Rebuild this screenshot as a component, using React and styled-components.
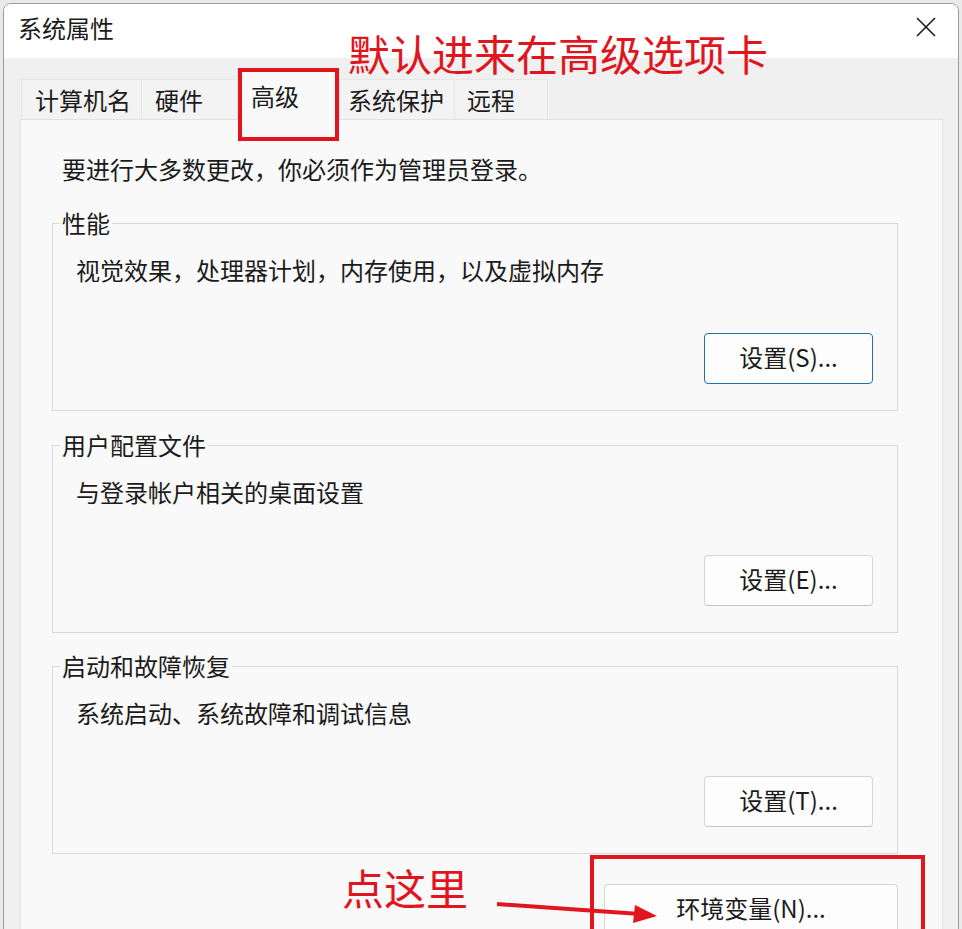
import React from 'react'
import styled, { createGlobalStyle } from 'styled-components'

const RED = '#e1151d'

const GlobalStyle = createGlobalStyle`
  html, body {
    margin: 0;
    padding: 0;
  }
  body {
    background: #e9e9e9;
    font-family: "Noto Sans CJK SC", "Noto Sans", sans-serif;
    color: #1b1b1b;
    overflow: hidden;
  }
`

const Page = styled.div`
  position: relative;
  width: 962px;
  height: 929px;
  box-sizing: border-box;
  padding: 3px 0 0 3px;
  overflow: hidden;
`

const Window = styled.div`
  width: 956px;
  height: 1000px;
  box-sizing: border-box;
  border: 1px solid #9c9c9c;
  border-radius: 8px 8px 0 0;
  background: #f0f0f0;
  overflow: hidden;
`

const TitleBar = styled.div`
  height: 54px;
  background: #ffffff;
  display: flex;
  align-items: center;
  justify-content: space-between;
  padding-left: 14px;
`

const Title = styled.div`
  font-size: 24px;
  line-height: 32px;
  margin-bottom: 6px;
`

const CloseButton = styled.div`
  width: 20px;
  height: 20px;
  margin: 0 22px 8px 0;
  display: flex;
  align-items: center;
  justify-content: center;
`

const Body = styled.div`
  padding: 10px 15px 0 16px;
`

const TabStrip = styled.div`
  display: flex;
  align-items: flex-end;
  height: 51px;
  padding-left: 2px;
`

const Tab = styled.div`
  position: relative;
  box-sizing: border-box;
  width: ${p => p.$w}px;
  height: ${p => (p.$active ? 52 : 40)}px;
  margin-left: -1px;
  margin-bottom: ${p => (p.$active ? -1 : 0)}px;
  padding: ${p => (p.$active ? 8 : 1)}px 0 0 ${p => p.$pad}px;
  font-size: 24px;
  line-height: 38px;
  white-space: nowrap;
  background: ${p => (p.$active ? '#f9f9f9' : '#f3f3f3')};
  border: 1px solid ${p => (p.$active ? '#e0e0e0' : '#e6e6e6')};
  border-bottom: none;
  z-index: ${p => (p.$active ? 1 : 0)};
`

const Panel = styled.div`
  height: 900px;
  box-sizing: border-box;
  background: #f9f9f9;
  border: 1px solid #e2e2e2;
  padding: 33px 44px 0 31px;
`

const Intro = styled.div`
  margin-left: 10px;
  font-size: 24px;
  line-height: 32px;
`

const Group = styled.fieldset`
  margin: ${p => p.$top}px 0 0 0;
  padding: 16px 24px 26px 7px;
  min-width: 0;
  border: 1px solid #dadada;
`

const GroupLabel = styled.legend`
  padding: 0 2px;
  font-size: 24px;
  line-height: 30px;
`

const Desc = styled.div`
  margin-left: 16px;
  font-size: 24px;
  line-height: 32px;
`

const ButtonRow = styled.div`
  display: flex;
  justify-content: flex-end;
  margin-top: ${p => p.$top}px;
`

const Button = styled.div`
  box-sizing: border-box;
  width: ${p => p.$w}px;
  height: 51px;
  display: flex;
  align-items: center;
  justify-content: center;
  background: #fdfdfd;
  border: 1px solid ${p => (p.$focus ? '#2170a6' : '#d6d6d6')};
  border-bottom-color: ${p => (p.$focus ? '#2170a6' : '#c4c4c4')};
  border-radius: 4px;
  font-size: 24px;
  line-height: 32px;
  padding-bottom: 3px;
`

const Note = styled.div`
  position: absolute;
  z-index: 2;
  left: ${p => p.$x}px;
  top: ${p => p.$y}px;
  color: ${RED};
  font-size: 42px;
  line-height: 42px;
  white-space: nowrap;
`

const Mark = styled.div`
  position: absolute;
  z-index: 2;
  left: ${p => p.$x}px;
  top: ${p => p.$y}px;
  width: ${p => p.$w}px;
  height: ${p => p.$h}px;
  box-sizing: border-box;
  border: 4px solid ${RED};
`

const Arrow = styled.svg`
  position: absolute;
  z-index: 2;
  left: 490px;
  top: 890px;
`

const tabs = [
  { label: '计算机名', w: 121, pad: 13 },
  { label: '硬件', w: 97, pad: 13 },
  { label: '高级', w: 103, pad: 13, active: true },
  { label: '系统保护', w: 116, pad: 8 },
  { label: '远程', w: 94, pad: 12 },
]

const groups = [
  { label: '性能', desc: '视觉效果，处理器计划，内存使用，以及虚拟内存', btn: '设置(S)...', focus: true, top: 23 },
  { label: '用户配置文件', desc: '与登录帐户相关的桌面设置', btn: '设置(E)...', top: 19 },
  { label: '启动和故障恢复', desc: '系统启动、系统故障和调试信息', btn: '设置(T)...', top: 18 },
]

export default function App() {
  return (
    <Page>
      <GlobalStyle />
      <Window>
        <TitleBar>
          <Title>系统属性</Title>
          <CloseButton>
            <svg width="20" height="20" viewBox="0 0 20 20">
              <path d="M1 1 L19 19 M19 1 L1 19" stroke="#1b1b1b" strokeWidth="1.6" fill="none" />
            </svg>
          </CloseButton>
        </TitleBar>
        <Body>
          <TabStrip>
            {tabs.map(t => (
              <Tab key={t.label} $w={t.w} $pad={t.pad} $active={t.active}>
                {t.label}
              </Tab>
            ))}
          </TabStrip>
          <Panel>
            <Intro>要进行大多数更改，你必须作为管理员登录。</Intro>
            {groups.map(g => (
              <Group key={g.label} $top={g.top}>
                <GroupLabel>{g.label}</GroupLabel>
                <Desc>{g.desc}</Desc>
                <ButtonRow $top={47}>
                  <Button $w={169} $focus={g.focus}>{g.btn}</Button>
                </ButtonRow>
              </Group>
            ))}
            <ButtonRow $top={30}>
              <Button $w={294}>环境变量(N)...</Button>
            </ButtonRow>
          </Panel>
        </Body>
      </Window>

      <Note $x={348} $y={32}>默认进来在高级选项卡</Note>
      <Mark $x={238} $y={68} $w={101} $h={73} />
      <Note $x={342} $y={866}>点这里</Note>
      <Arrow width="180" height="40" viewBox="0 0 180 40">
        <path d="M7 14 L150 24" stroke={RED} strokeWidth="4" fill="none" />
        <polygon points="167,26 145,15 143,33" fill={RED} />
      </Arrow>
      <Mark $x={590} $y={855} $w={335} $h={100} />
    </Page>
  )
}
